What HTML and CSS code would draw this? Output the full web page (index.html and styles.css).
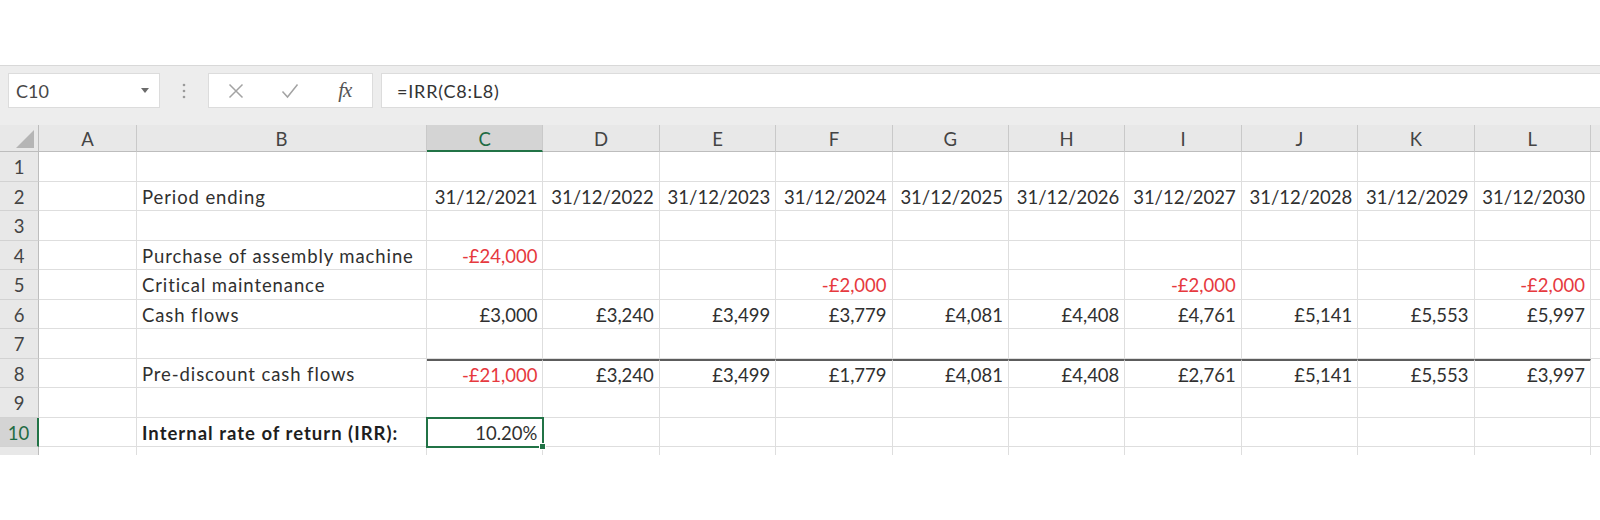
FILE: index.html
```html
<!DOCTYPE html>
<html lang="en">
<head>
<meta charset="utf-8">
<title>IRR spreadsheet</title>
<link rel="stylesheet" href="styles.css">
</head>
<body>
<div class="spacer"></div>
<div class="toolbar">
  <div class="namebox">
    <span class="name">C10</span>
    <svg class="dd" width="8" height="5" viewBox="0 0 8 5"><path d="M0 0H8L4 5Z" fill="#6b6b6b"/></svg>
  </div>
  <div class="grip">
    <svg width="4" height="16" viewBox="0 0 4 16"><circle cx="2" cy="2" r="1.3" fill="#9a9a9a"/><circle cx="2" cy="8" r="1.3" fill="#9a9a9a"/><circle cx="2" cy="14" r="1.3" fill="#9a9a9a"/></svg>
  </div>
  <div class="btns">
    <span class="btn"><svg width="16" height="16" viewBox="0 0 16 16"><path d="M1.5 1.5L14.5 14.5M14.5 1.5L1.5 14.5" stroke="#a3a3a3" stroke-width="1.5" fill="none"/></svg></span>
    <span class="btn"><svg width="18" height="16" viewBox="0 0 18 16"><path d="M1.5 8.5L6.5 14L16.5 1.5" stroke="#a3a3a3" stroke-width="1.5" fill="none"/></svg></span>
    <span class="btn fx">fx</span>
  </div>
  <div class="formula">=IRR(C8:L8)</div>
</div>

<div class="sheet">
  <div class="h corner"><span class="tri"></span></div><div class="h">A</div><div class="h">B</div><div class="h hsel">C</div><div class="h">D</div><div class="h">E</div><div class="h">F</div><div class="h">G</div><div class="h">H</div><div class="h">I</div><div class="h">J</div><div class="h">K</div><div class="h">L</div><div class="h"></div>

  <div class="rh">1</div><div class="c"></div><div class="c"></div><div class="c"></div><div class="c"></div><div class="c"></div><div class="c"></div><div class="c"></div><div class="c"></div><div class="c"></div><div class="c"></div><div class="c"></div><div class="c"></div><div class="c"></div>

  <div class="rh">2</div><div class="c"></div><div class="c t">Period ending</div><div class="c n">31/12/2021</div><div class="c n">31/12/2022</div><div class="c n">31/12/2023</div><div class="c n">31/12/2024</div><div class="c n">31/12/2025</div><div class="c n">31/12/2026</div><div class="c n">31/12/2027</div><div class="c n">31/12/2028</div><div class="c n">31/12/2029</div><div class="c n">31/12/2030</div><div class="c"></div>

  <div class="rh">3</div><div class="c"></div><div class="c"></div><div class="c"></div><div class="c"></div><div class="c"></div><div class="c"></div><div class="c"></div><div class="c"></div><div class="c"></div><div class="c"></div><div class="c"></div><div class="c"></div><div class="c"></div>

  <div class="rh">4</div><div class="c"></div><div class="c t">Purchase of assembly machine</div><div class="c n neg">-£24,000</div><div class="c"></div><div class="c"></div><div class="c"></div><div class="c"></div><div class="c"></div><div class="c"></div><div class="c"></div><div class="c"></div><div class="c"></div><div class="c"></div>

  <div class="rh">5</div><div class="c"></div><div class="c t">Critical maintenance</div><div class="c"></div><div class="c"></div><div class="c"></div><div class="c n neg">-£2,000</div><div class="c"></div><div class="c"></div><div class="c n neg">-£2,000</div><div class="c"></div><div class="c"></div><div class="c n neg">-£2,000</div><div class="c"></div>

  <div class="rh">6</div><div class="c"></div><div class="c t">Cash flows</div><div class="c n">£3,000</div><div class="c n">£3,240</div><div class="c n">£3,499</div><div class="c n">£3,779</div><div class="c n">£4,081</div><div class="c n">£4,408</div><div class="c n">£4,761</div><div class="c n">£5,141</div><div class="c n">£5,553</div><div class="c n">£5,997</div><div class="c"></div>

  <div class="rh">7</div><div class="c"></div><div class="c"></div><div class="c"></div><div class="c"></div><div class="c"></div><div class="c"></div><div class="c"></div><div class="c"></div><div class="c"></div><div class="c"></div><div class="c"></div><div class="c"></div><div class="c"></div>

  <div class="rh">8</div><div class="c"></div><div class="c t">Pre-discount cash flows</div><div class="c n tb neg">-£21,000</div><div class="c n tb">£3,240</div><div class="c n tb">£3,499</div><div class="c n tb">£1,779</div><div class="c n tb">£4,081</div><div class="c n tb">£4,408</div><div class="c n tb">£2,761</div><div class="c n tb">£5,141</div><div class="c n tb">£5,553</div><div class="c n tb">£3,997</div><div class="c"></div>

  <div class="rh">9</div><div class="c"></div><div class="c"></div><div class="c"></div><div class="c"></div><div class="c"></div><div class="c"></div><div class="c"></div><div class="c"></div><div class="c"></div><div class="c"></div><div class="c"></div><div class="c"></div><div class="c"></div>

  <div class="rh rsel">10</div><div class="c"></div><div class="c t b">Internal rate of return (IRR):</div><div class="c n active">10.20%<span class="handle"></span></div><div class="c"></div><div class="c"></div><div class="c"></div><div class="c"></div><div class="c"></div><div class="c"></div><div class="c"></div><div class="c"></div><div class="c"></div><div class="c"></div>

  <div class="rh">11</div><div class="c"></div><div class="c"></div><div class="c"></div><div class="c"></div><div class="c"></div><div class="c"></div><div class="c"></div><div class="c"></div><div class="c"></div><div class="c"></div><div class="c"></div><div class="c"></div><div class="c"></div>
</div>
</body>
</html>
```
FILE: styles.css
```css
html, body {
  margin: 0;
  padding: 0;
  background: #ffffff;
}
body {
  width: 1600px;
  height: 520px;
  overflow: hidden;
  font-family: "Lato", "Open Sans", sans-serif;
  color: #303030;
}
.spacer {
  height: 65px;
}
.toolbar {
  display: flex;
  align-items: center;
  height: 60px;
  box-sizing: border-box;
  padding: 7px 0 17px 8px;
  background: #ededed;
  border-top: 1px solid #d8d8d8;
}
.namebox {
  width: 152px;
  height: 35px;
  box-sizing: border-box;
  background: #fff;
  border: 1px solid #dcdcdc;
  display: flex;
  align-items: center;
  justify-content: space-between;
  padding: 0 10px 0 7px;
  font-size: 18px;
  color: #474747;
}
.grip {
  width: 48px;
  display: flex;
  justify-content: center;
  align-items: center;
}
.grip svg { display: block; }
.btns {
  width: 165px;
  height: 35px;
  box-sizing: border-box;
  background: #fff;
  border: 1px solid #dcdcdc;
  display: flex;
  align-items: center;
}
.btn {
  flex: 1;
  display: flex;
  justify-content: center;
  align-items: center;
}
.btn svg { display: block; }
.fx {
  font-family: "Liberation Serif", serif;
  font-style: italic;
  font-size: 21px;
  color: #555;
  letter-spacing: -1px;
}
.formula {
  flex: 1;
  height: 35px;
  box-sizing: border-box;
  margin-left: 8px;
  background: #fff;
  border: 1px solid #dcdcdc;
  border-right: none;
  display: flex;
  align-items: center;
  padding-left: 15px;
  font-size: 18px;
  letter-spacing: 0.8px;
  color: #333;
}
.sheet {
  display: grid;
  grid-template-columns: 39px 98px 290px repeat(10, 116.4px) 1fr;
  grid-template-rows: 27px repeat(11, 29.5px);
  height: 330px;
  overflow: hidden;
  font-size: 18.5px;
}
.h {
  background: #e8e8e8;
  border-right: 1px solid #c9c9c9;
  border-bottom: 1px solid #bdbdbd;
  box-sizing: border-box;
  display: flex;
  align-items: center;
  justify-content: center;
  color: #444;
  padding-top: 2px;
}
.corner {
  position: relative;
  border-right: 1px solid #bdbdbd;
}
.tri {
  position: absolute;
  right: 4px;
  bottom: 3px;
  width: 0;
  height: 0;
  border-left: 18px solid transparent;
  border-bottom: 18px solid #b5b5b5;
}
.hsel {
  background: #d4d4d4;
  border-bottom: 2px solid #217346;
  color: #1f6b43;
}
.rh {
  background: #e8e8e8;
  border-right: 1px solid #bdbdbd;
  border-bottom: 1px solid #d2d2d2;
  box-sizing: border-box;
  display: flex;
  align-items: center;
  justify-content: center;
  color: #444;
  padding-top: 2px;
}
.rsel {
  background: #d4d4d4;
  border-right: 2px solid #217346;
  color: #1f6b43;
}
.c {
  border-right: 1px solid #dedede;
  border-bottom: 1px solid #dedede;
  box-sizing: border-box;
  display: flex;
  align-items: center;
  padding: 2px 5px 0 5px;
  white-space: nowrap;
  overflow: visible;
  min-width: 0;
}
.t {
  justify-content: flex-start;
  letter-spacing: 0.9px;
}
.n {
  justify-content: flex-end;
}
.neg {
  color: #e6393e;
}
.b {
  font-weight: 700;
  color: #1e1e1e;
  letter-spacing: 1px;
}
.tb {
  border-top: 2px solid #5c5c5c;
}
.active {
  position: relative;
  outline: 2px solid #217346;
  outline-offset: -1px;
}
.handle {
  position: absolute;
  right: -4px;
  bottom: -4px;
  width: 5px;
  height: 5px;
  background: #217346;
  border: 1px solid #fff;
}
```
